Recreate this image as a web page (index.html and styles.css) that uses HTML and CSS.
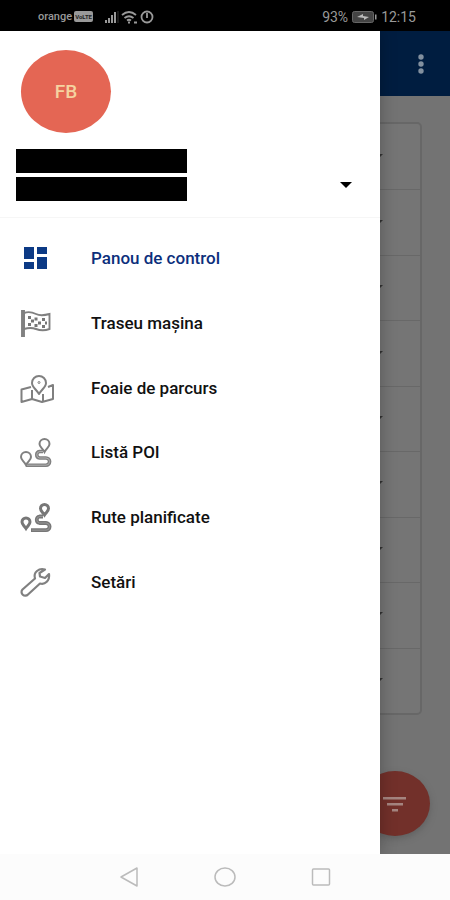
FILE: index.html
```html
<!DOCTYPE html>
<html lang="ro">
<head>
<meta charset="utf-8">
<meta name="viewport" content="width=device-width, initial-scale=1">
<title>Panou de control</title>
<link rel="stylesheet" href="styles.css">
</head>
<body>
<header class="status">
  <div class="status-left">
    <span class="carrier">orange</span>
    <span class="volte">VoLTE</span>
    <svg class="signals" width="52" height="16" viewBox="0 0 52 16" fill="none" stroke="#999" stroke-width="2">
      <path d="M2 14v-3M5 14V9M8 14V6M11 14V3"/>
      <path d="M14 2v12" stroke="#333" stroke-width="1"/>
      <path d="M18 6q7-6 14 0M20.500 9q4.500-3.500 9 0M23 11.500q2-1.500 4 0" stroke-width="1.800"/>
      <path d="M24 13.500h2M30 13.500h3"/>
      <circle cx="43" cy="8" r="5.500" stroke-width="1.800"/>
      <path d="M43 4v5" stroke-width="1.800"/>
    </svg>
  </div>
  <div class="status-right">
    <span>93%</span>
    <svg width="25" height="12" viewBox="0 0 25 12">
      <rect x="0.500" y="0.500" width="21" height="11" rx="2" fill="#444" stroke="#666"/>
      <path d="M23 3.500h1.500v5H23z" fill="#999"/>
      <path d="M5 6l6-3v2l6 1-5 3V7z" fill="#bbb"/>
    </svg>
    <span>12:15</span>
  </div>
</header>
<div class="app">
  <main class="page">
    <div class="toolbar">
      <button class="more" type="button" aria-label="Mai multe">
        <svg width="8" height="22" viewBox="0 0 8 22" fill="#82909f"><circle cx="4" cy="4" r="2.700"/><circle cx="4" cy="11" r="2.700"/><circle cx="4" cy="18" r="2.700"/></svg>
      </button>
    </div>
    <ul class="card">
      <li></li><li></li><li></li><li></li><li></li><li></li><li></li><li></li><li></li>
    </ul>
    <button class="fab" type="button" aria-label="Filtru">
      <svg width="24" height="16" viewBox="0 0 24 16" fill="#a58580"><path d="M0 1h23v2.500H0zM4 7h16v2.500H4zM9 13h6v2.500H9z"/></svg>
    </button>
  </main>
  <aside class="drawer">
    <div class="account">
      <div class="avatar">FB</div>
      <div class="account-row">
        <div class="redacted"><span></span><span></span></div>
        <button class="expand" type="button" aria-label="Conturi">
          <svg width="12" height="6" viewBox="0 0 12 6"><path d="M0 0h12L6 6z" fill="#000"/></svg>
        </button>
      </div>
    </div>
    <nav class="menu">
      <a href="#" class="active">
        <svg width="36" height="36" viewBox="0 0 36 36" fill="#0c3a85"><path d="M4 7h10v12H4zM17 7h10v7H17zM4 22h10v7H4zM17 17h10v12H17z"/></svg>
        Panou de control</a>
      <a href="#">
        <svg width="36" height="36" viewBox="0 0 36 36" fill="none" stroke="#808080" stroke-width="1.900">
          <path d="M2 6h2v25H2z" fill="#999"/>
          <path d="M4 8c5-2 8-1 12 1s8 1.500 13.500 0v15c-5.500 2-9.500 1.500-13.500 0s-7-1.500-12 0z"/>
          <path d="M8 11h3v3H8zM14.500 12.500h3v3h-3zM22 13h3v3h-3zM11 14.500h3v3h-3zM18 16.500h3v3h-3zM25 16.500h2v3h-2zM8 18h3v3H8zM14.500 19h3v3h-3zM22 20h3v3h-3z" fill="#777" stroke="none"/>
        </svg>
        Traseu mașina</a>
      <a href="#">
        <svg width="36" height="36" viewBox="0 0 36 36" fill="none" stroke="#808080" stroke-width="2" stroke-linejoin="round">
          <path d="M19 24c-3-5-7-7-7-11a7 7 0 0 1 14 0c0 4-4 6-7 11z"/>
          <circle cx="19" cy="12.500" r="1" stroke-width="1"/>
          <path d="M11 17L1.500 19.500V32L12 29l10 3 11-3V15l-5 2M12 20v9M23 24v8"/>
        </svg>
        Foaie de parcurs</a>
      <a href="#">
        <svg width="36" height="36" viewBox="0 0 36 36" fill="none" stroke="#808080" stroke-width="2">
          <path d="M24.500 18c-2-4-5-5-5-8a5 5 0 0 1 10 0c0 3-3 4-5 8zM6 31c-2-4-5-5-5-8a5 5 0 0 1 10 0c0 3-3 4-5 8z"/>
          <path d="M23 17.500h-3.500a3.300 3.300 0 0 0 0 6.500H26a3.600 3.600 0 0 1 0 7.200H6" stroke-width="3.600"/>
          <path d="M23 17.500h-3.500a3.300 3.300 0 0 0 0 6.500H26a3.600 3.600 0 0 1 0 7.200H7" stroke="#bbb" stroke-width="0.800"/>
        </svg>
        Listă POI</a>
      <a href="#">
        <svg width="36" height="36" viewBox="0 0 36 36" fill="none" stroke="#777" stroke-width="3">
          <path d="M24.500 16c-2-3-4-4-4-6.500a4 4 0 0 1 8 0c0 2.500-2 3.500-4 6.500zM6 29.500c-2-3-4-4-4-6.500a4 4 0 0 1 8 0c0 2.500-2 3.500-4 6.500z"/>
          <path d="M23 17.500h-3.500a3.300 3.300 0 0 0 0 6.500H26a3.600 3.600 0 0 1 0 7.200H11" stroke-width="3.800"/>
          <path d="M23 17.500h-3.500a3.300 3.300 0 0 0 0 6.500H26a3.600 3.600 0 0 1 0 7.200H12" stroke="#aaa" stroke-width="0.600"/>
        </svg>
        Rute planificate</a>
      <a href="#">
        <svg width="36" height="36" viewBox="0 0 36 36" fill="none" stroke="#808080" stroke-width="2.200" stroke-linejoin="round">
          <path d="M25 5.500c-6-2-12 3-10 9L2.500 25.500a3.700 3.700 0 0 0 5.500 5L20 19.500c5 1.500 10-3 9-9.500l-4 4-5-1.500-.5-3.500z"/>
        </svg>
        Setări</a>
    </nav>
  </aside>
</div>
<footer class="system">
  <button type="button" aria-label="Înapoi"><svg width="22" height="22" viewBox="0 0 22 22"><path d="M3 11L19 2v18z"/></svg></button>
  <button type="button" aria-label="Acasă"><svg width="22" height="22" viewBox="0 0 22 22"><ellipse cx="11" cy="11" rx="10" ry="9"/></svg></button>
  <button type="button" aria-label="Recente"><svg width="22" height="22" viewBox="0 0 22 22"><rect x="2.500" y="3" width="17" height="16" rx="1"/></svg></button>
</footer>
</body>
</html>
```
FILE: styles.css
```css
* { box-sizing: border-box; }
body {
  margin: 0;
  min-height: 100vh;
  display: flex;
  flex-direction: column;
  font-family: Roboto, "Liberation Sans", sans-serif;
  background: #fff;
}
button { border: 0; padding: 0; background: none; display: grid; place-items: center; }
svg { display: block; flex: none; }

.status {
  height: 31px;
  padding: 2px 34px 0 38px;
  display: flex;
  align-items: center;
  justify-content: space-between;
  background: #000;
  color: #999;
}
.status-left, .status-right { display: flex; align-items: center; }
.carrier { font-size: 11px; font-weight: 500; }
.volte {
  margin-left: 2px;
  padding: 0 1px;
  border-radius: 2px;
  background: #999;
  color: #222;
  font-size: 6px;
  font-weight: 700;
  line-height: 11px;
}
.signals { margin-left: 11px; }
.status-right { gap: 4px; font-size: 14px; }

.app { position: relative; flex: 1; display: flex; overflow: hidden; }
.page { flex: 1; background: #737373; }
.toolbar {
  height: 65px;
  padding-right: 25px;
  display: flex;
  align-items: center;
  justify-content: flex-end;
  background: #001d40;
}
.card {
  height: 593px;
  margin: 26px 28px 0;
  padding: 0;
  list-style: none;
  display: grid;
  grid-auto-rows: 1fr;
  border: 2px solid #676767;
  border-radius: 5px;
  background: #757575;
}
.card li {
  padding-right: 37px;
  display: flex;
  align-items: center;
  justify-content: flex-end;
}
.card li + li { border-top: 1px solid #686868; }
.card li::after {
  content: "";
  border: 6px solid transparent;
  border-top-color: #333;
  border-bottom: 0;
}
.fab {
  position: absolute;
  right: 20px;
  bottom: 18px;
  width: 70px;
  height: 65px;
  border-radius: 50%;
  background: #72302a;
  box-shadow: 0 3px 6px #5559;
}

.drawer {
  position: absolute;
  top: 0;
  bottom: 0;
  left: 0;
  right: 70px;
  background: #fff;
  box-shadow: 0 0 16px #0004;
}
.account {
  height: 187px;
  padding: 19px 16px 0;
  border-bottom: 1px solid #f6f6f6;
}
.avatar {
  width: 90px;
  height: 83px;
  margin-left: 5px;
  display: grid;
  place-items: center;
  border-radius: 50%;
  background: #e46654;
  color: #f5d3a0;
  font-size: 19px;
  font-weight: 500;
}
.account-row {
  margin-top: 16px;
  display: flex;
  align-items: flex-end;
  justify-content: space-between;
}
.redacted { width: 171px; display: grid; gap: 4px; }
.redacted span { height: 24px; background: #000; }
.expand { width: 36px; height: 32px; }

.menu {
  height: 388px;
  margin-top: 8px;
  display: flex;
  flex-direction: column;
}
.menu a {
  flex: 1;
  padding-left: 20px;
  display: flex;
  align-items: center;
  gap: 35px;
  color: #111;
  font-size: 17px;
  font-weight: 500;
  text-decoration: none;
}
.menu .active { color: #0c2f7c; }

.system {
  height: 46px;
  padding: 0 81px;
  display: flex;
  align-items: center;
  justify-content: space-around;
  background: #fcfcfc;
}
.system svg { fill: none; stroke: #bbb; stroke-width: 1.5; stroke-linejoin: round; }
```
